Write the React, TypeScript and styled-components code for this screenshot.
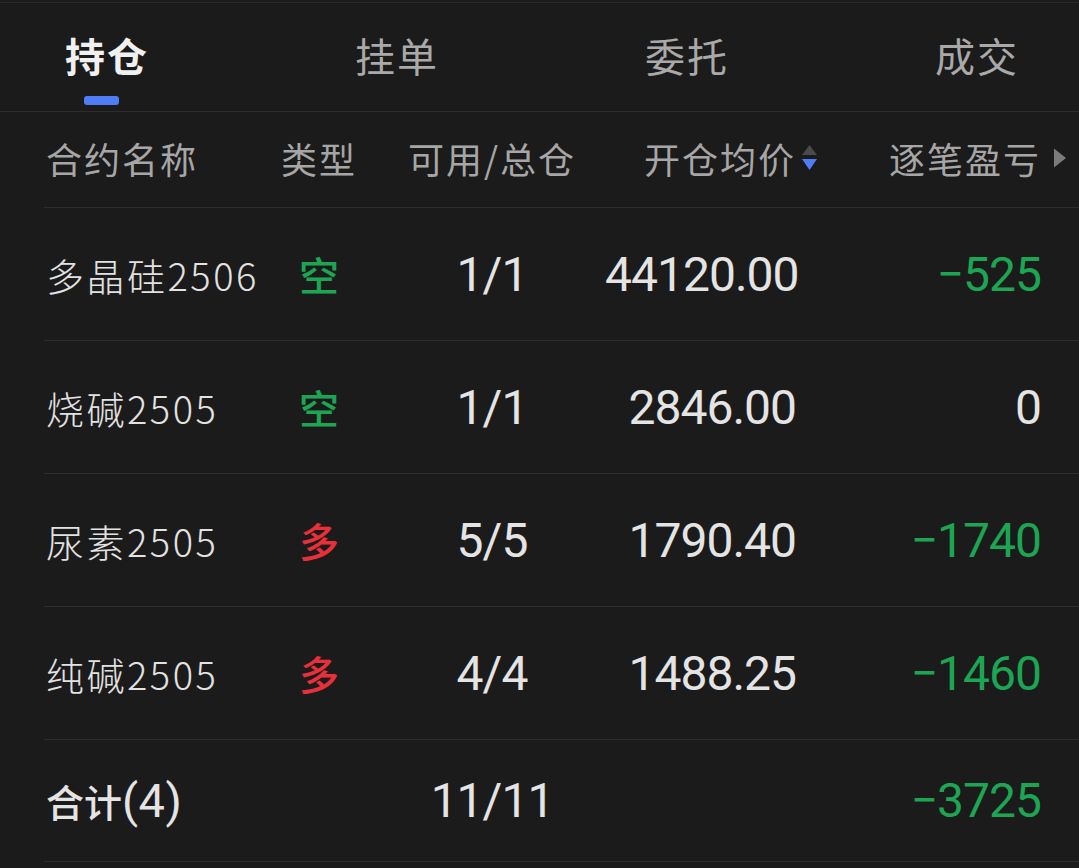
import React from "react";
import styled, { createGlobalStyle } from "styled-components";

const Global = createGlobalStyle`
  html, body { margin: 0; padding: 0; background: #1b1b1b; }
  body { padding-top: 2px; font-family: "Noto Sans CJK SC", "Noto Sans", sans-serif; }
  * { box-sizing: border-box; }
`;

const Page = styled.div`
  width: 1079px;
  background: #1b1b1b;
  color: #e4e4e4;
`;

const TabBar = styled.div`
  display: flex;
  align-items: flex-start;
  gap: 206px;
  height: 110px;
  padding: 28px 0 0 65px;
  border-top: 1px solid #2a2a2a;
  border-bottom: 1px solid #2e2e2e;
`;

const Tab = styled.div<{ $active?: boolean }>`
  display: flex;
  flex-direction: column;
  align-items: flex-start;
  font-size: 40px;
  line-height: 48px;
  letter-spacing: 2px;
  font-weight: ${(p) => (p.$active ? 700 : 400)};
  color: ${(p) => (p.$active ? "#f0f0f0" : "#a9a9a9")};
  white-space: nowrap;
`;

const Indicator = styled.div`
  width: 35px;
  height: 9px;
  margin: 17px 0 0 19px;
  border-radius: 3px;
  background: #4f7cf7;
`;

const Table = styled.div`
  margin-left: 44px;
`;

const Grid = styled.div<{ $h: number; $shift?: number }>`
  display: grid;
  grid-template-columns: 215px 120px 226px 191px 245px 38px;
  align-items: center;
  height: ${(p) => p.$h}px;
  padding-bottom: ${(p) => p.$shift || 0}px;
  border-bottom: 1px solid #2e2e2e;
`;

const HeadCell = styled.div<{ $align: "left" | "center" | "right" }>`
  display: flex;
  align-items: center;
  justify-content: ${(p) =>
    p.$align === "left" ? "flex-start" : p.$align === "center" ? "center" : "flex-end"};
  padding-left: ${(p) => (p.$align === "left" ? "2px" : "0")};
  font-size: 36px;
  color: #a6a6a6;
  white-space: nowrap;
  letter-spacing: 2px;
`;

const HeadIcon = styled.svg<{ $gap: number }>`
  flex: none;
  margin-left: ${(p) => p.$gap}px;
  margin-right: ${(p) => -p.$gap - 15}px;
`;

const Name = styled.div`
  padding-left: 2px;
  font-size: 38px;
  font-weight: 300;
  letter-spacing: 2.5px;
  color: #e2e2e2;
  white-space: nowrap;
`;

const Side = styled.div<{ $long: boolean }>`
  text-align: center;
  font-size: 40px;
  font-weight: 500;
  color: ${(p) => (p.$long ? "#e8303a" : "#1ca552")};
`;

const Num = styled.div<{ $align: "center" | "right"; $color?: string }>`
  text-align: ${(p) => p.$align};
  font-family: Roboto, "Liberation Sans", sans-serif;
  font-size: 48px;
  letter-spacing: -1px;
  color: ${(p) => p.$color || "#e4e4e4"};
  white-space: nowrap;
`;

const TotalLabel = styled.div`
  display: flex;
  align-items: baseline;
  padding-left: 2px;
  font-size: 38px;
  font-weight: 500;
  color: #e4e4e4;
  white-space: nowrap;
`;

const TotalCount = styled.span`
  font-family: Roboto, sans-serif;
  font-weight: 400;
  font-size: 47px;
  letter-spacing: 0.5px;
`;

const GREEN = "#1ca552";

const rows = [
  { name: "多晶硅2506", long: false, avail: "1/1", price: "44120.00", pnl: "-525" },
  { name: "烧碱2505", long: false, avail: "1/1", price: "2846.00", pnl: "0" },
  { name: "尿素2505", long: true, avail: "5/5", price: "1790.40", pnl: "-1740" },
  { name: "纯碱2505", long: true, avail: "4/4", price: "1488.25", pnl: "-1460" },
];

const fmt = (v: string) => v.replace("-", "\u2212");

export default function App() {
  return (
    <Page>
      <Global />
      <TabBar>
        <Tab $active>
          持仓
          <Indicator />
        </Tab>
        <Tab>挂单</Tab>
        <Tab>委托</Tab>
        <Tab>成交</Tab>
      </TabBar>
      <Table>
        <Grid $h={96} $shift={4}>
          <HeadCell $align="left">合约名称</HeadCell>
          <HeadCell $align="center">类型</HeadCell>
          <HeadCell $align="center">可用/总仓</HeadCell>
          <HeadCell $align="right">
            开仓均价
            <HeadIcon $gap={6} width="15" height="28" viewBox="0 0 15 28">
              <polygon points="7.5,1 15,11 0,11" fill="#4a4a4a" />
              <polygon points="0,15 15,15 7.5,26" fill="#4f7cf7" />
            </HeadIcon>
          </HeadCell>
          <HeadCell $align="right">
            逐笔盈亏
            <HeadIcon $gap={11} width="15" height="20" viewBox="0 0 15 20">
              <polygon points="2,0.5 14,10 2,19.5" fill="#7b7b7b" />
            </HeadIcon>
          </HeadCell>
          <div />
        </Grid>
        {rows.map((r) => (
          <Grid $h={133} key={r.name}>
            <Name>{r.name}</Name>
            <Side $long={r.long}>{r.long ? "多" : "空"}</Side>
            <Num $align="center">{r.avail}</Num>
            <Num $align="right">{r.price}</Num>
            <Num $align="right" $color={r.pnl === "0" ? "#e4e4e4" : GREEN}>
              {fmt(r.pnl)}
            </Num>
            <div />
          </Grid>
        ))}
        <Grid $h={122}>
          <TotalLabel>
            合计<TotalCount>(4)</TotalCount>
          </TotalLabel>
          <div />
          <Num $align="center">11/11</Num>
          <div />
          <Num $align="right" $color={GREEN}>
            {fmt("-3725")}
          </Num>
          <div />
        </Grid>
      </Table>
    </Page>
  );
}
